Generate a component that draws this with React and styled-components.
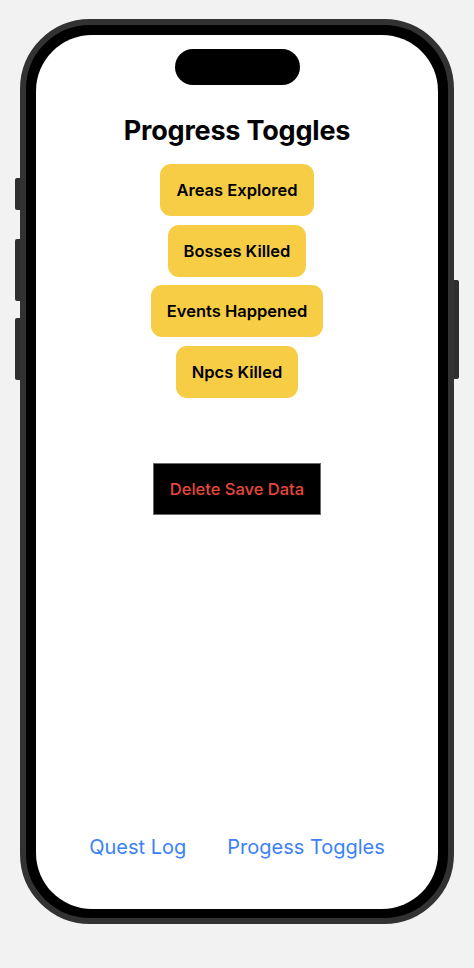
import React from 'react';
import styled, { createGlobalStyle } from 'styled-components';

const GlobalStyle = createGlobalStyle`
  html, body {
    margin: 0;
    padding: 0;
    background: #f2f2f2;
    font-family: Inter, "Noto Sans", "Liberation Sans", sans-serif;
  }
`;

const S_Page = styled.div`
  width: 474px;
  height: 968px;
  padding: 19px 0 0 20px;
  box-sizing: border-box;
`;

const S_Phone = styled.div`
  position: relative;
  width: 434px;
  height: 905px;
  box-sizing: border-box;
  border: 6px solid #323232;
  border-radius: 70px;
  padding: 10px;
  background: #000;
`;

const S_SideButton = styled.div`
  position: absolute;
  width: 5px;
  background: #2e2e2e;
  top: ${(p) => p.top}px;
  height: ${(p) => p.h}px;
  ${(p) => (p.right ? 'right: -11px; border-radius: 0 2px 2px 0;' : 'left: -11px; border-radius: 2px 0 0 2px;')}
`;

const S_Screen = styled.div`
  width: 402px;
  height: 874px;
  border-radius: 56px;
  background: #fff;
  overflow: hidden;
  display: flex;
  flex-direction: column;
  align-items: center;
`;

const S_Island = styled.div`
  margin-top: 14px;
  width: 125px;
  height: 36px;
  border-radius: 18px;
  background: #000;
  flex-shrink: 0;
`;

const S_Title = styled.h1`
  margin: 29px 0 0;
  font-size: 27px;
  line-height: 34px;
  font-weight: 700;
  color: #000;
  letter-spacing: -0.2px;
`;

const S_ToggleList = styled.div`
  margin-top: 16px;
  display: flex;
  flex-direction: column;
  align-items: center;
  gap: 8.5px;
`;

const S_Toggle = styled.button`
  height: 52px;
  padding: 0 16px;
  border: none;
  border-radius: 11px;
  background: #f7cd46;
  color: #000;
  font-family: inherit;
  font-size: 16.5px;
  font-weight: 600;
`;

const S_DeleteButton = styled.button`
  margin-top: 65px;
  width: 168px;
  height: 52px;
  border: 1px solid #6a6a6a;
  background: #000;
  color: #e8473b;
  font-family: inherit;
  font-size: 16.5px;
  font-weight: 500;
`;

const S_Spacer = styled.div`
  flex: 1;
`;

const S_TabBar = styled.nav`
  display: flex;
  gap: 41px;
  margin-bottom: 50px;
`;

const S_TabLink = styled.a`
  color: #3b82f6;
  font-size: 20px;
  font-weight: 400;
  text-decoration: none;
`;

const toggles = ['Areas Explored', 'Bosses Killed', 'Events Happened', 'Npcs Killed'];

function App() {
  return (
    <S_Page>
      <GlobalStyle />
      <S_Phone>
        <S_SideButton top={153} h={32} />
        <S_SideButton top={214} h={62} />
        <S_SideButton top={293} h={62} />
        <S_SideButton right top={255} h={99} />
        <S_Screen>
          <S_Island />
          <S_Title>Progress Toggles</S_Title>
          <S_ToggleList>
            {toggles.map((t) => (
              <S_Toggle key={t}>{t}</S_Toggle>
            ))}
          </S_ToggleList>
          <S_DeleteButton>Delete Save Data</S_DeleteButton>
          <S_Spacer />
          <S_TabBar>
            <S_TabLink>Quest Log</S_TabLink>
            <S_TabLink>Progess Toggles</S_TabLink>
          </S_TabBar>
        </S_Screen>
      </S_Phone>
    </S_Page>
  );
}

export default App;
